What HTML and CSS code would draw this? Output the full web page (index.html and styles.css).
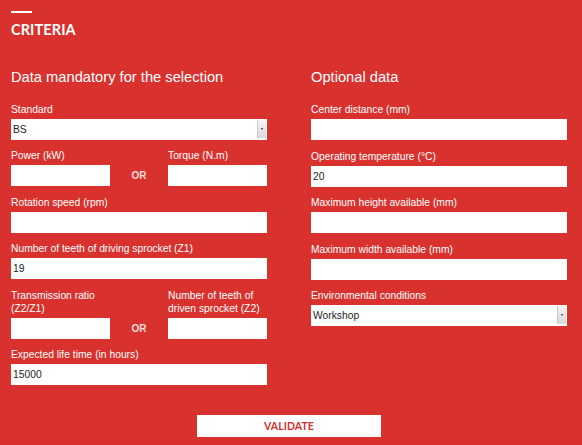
FILE: index.html
```html
<!DOCTYPE html>
<html>
<head>
<meta charset="utf-8">
<link rel="stylesheet" href="styles.css">
</head>
<body>
<div class="page">
  <div class="title-rule"></div>
  <h1 class="title">CRITERIA</h1>
  <div class="columns">
    <div class="col">
      <h2 class="col-title">Data mandatory for the selection</h2>
      <div class="field">
        <label class="lbl">Standard</label>
        <div class="select"><span class="val">BS</span><span class="arrow"><span class="tri"></span></span></div>
      </div>
      <div class="field">
        <div class="pair">
          <div class="pair-item"><label class="lbl">Power (kW)</label><div class="input"></div></div>
          <div class="or">OR</div>
          <div class="pair-item"><label class="lbl">Torque (N.m)</label><div class="input"></div></div>
        </div>
      </div>
      <div class="field">
        <label class="lbl">Rotation speed (rpm)</label>
        <div class="input"></div>
      </div>
      <div class="field">
        <label class="lbl">Number of teeth of driving sprocket (Z1)</label>
        <div class="input"><span class="val">19</span></div>
      </div>
      <div class="field">
        <div class="pair">
          <div class="pair-item"><label class="lbl">Transmission ratio<br>(Z2/Z1)</label><div class="input"></div></div>
          <div class="or">OR</div>
          <div class="pair-item"><label class="lbl">Number of teeth of<br>driven sprocket (Z2)</label><div class="input"></div></div>
        </div>
      </div>
      <div class="field">
        <label class="lbl">Expected life time (in hours)</label>
        <div class="input"><span class="val">15000</span></div>
      </div>
    </div>
    <div class="col">
      <h2 class="col-title">Optional data</h2>
      <div class="field">
        <label class="lbl">Center distance (mm)</label>
        <div class="input"></div>
      </div>
      <div class="field">
        <label class="lbl">Operating temperature (°C)</label>
        <div class="input"><span class="val">20</span></div>
      </div>
      <div class="field">
        <label class="lbl">Maximum height available (mm)</label>
        <div class="input"></div>
      </div>
      <div class="field">
        <label class="lbl">Maximum width available (mm)</label>
        <div class="input"></div>
      </div>
      <div class="field">
        <label class="lbl">Environmental conditions</label>
        <div class="select"><span class="val">Workshop</span><span class="arrow"><span class="tri"></span></span></div>
      </div>
    </div>
  </div>
  <div class="actions">
    <button class="validate">VALIDATE</button>
  </div>
</div>
</body>
</html>
```
FILE: styles.css
```css
html, body {
  margin: 0;
  padding: 0;
  background: #d8312e;
}
.page {
  width: 582px;
  height: 445px;
  box-sizing: border-box;
  padding: 11px 0 0 11px;
  background: #d8312e;
  color: #fff;
  font-family: "Liberation Sans", Arial, sans-serif;
  overflow: hidden;
}
.title-rule {
  width: 21px;
  height: 2px;
  background: #fff;
}
.title {
  margin: 9px 0 0 0;
  font-family: Lato, sans-serif;
  font-weight: 700;
  font-size: 14.5px;
  line-height: 16px;
  letter-spacing: 0.1px;
}
.columns {
  display: grid;
  grid-template-columns: 256px 256px;
  column-gap: 44px;
  margin-top: 30px;
}
.col {
  display: flex;
  flex-direction: column;
}
.col-title {
  margin: 0 0 17px 0;
  font-weight: 400;
  font-size: 14.7px;
  line-height: 18px;
}
.field {
  margin-bottom: 9.5px;
}
.lbl {
  display: block;
  font-size: 10.3px;
  line-height: 13px;
  margin-bottom: 3px;
}
.input, .select {
  height: 21px;
  background: #fff;
  color: #222;
  display: flex;
  align-items: center;
  box-sizing: border-box;
}
.select {
  height: 20.5px;
}
.val {
  font-size: 10.3px;
  padding-left: 2px;
  flex: 1;
}
.arrow {
  width: 8px;
  height: 18px;
  margin-right: 1px;
  background: linear-gradient(#f4f4f4, #d8d8d8);
  border-left: 1px solid #c8c8c8;
  display: flex;
  align-items: center;
  justify-content: center;
}
.tri {
  width: 0;
  height: 0;
  border-left: 1.5px solid transparent;
  border-right: 1.5px solid transparent;
  border-top: 2px solid #222;
}
.pair {
  display: grid;
  grid-template-columns: 99px 58px 99px;
  align-items: end;
}
.or {
  height: 21px;
  line-height: 21px;
  text-align: center;
  font-size: 10px;
  font-weight: 700;
  color: #f6dcdb;
}
.actions {
  display: flex;
  justify-content: flex-start;
  padding-left: 186px;
  margin-top: 20px;
}
.validate {
  width: 184px;
  height: 22px;
  border: none;
  background: #fff;
  color: #d0302f;
  font-family: Lato, sans-serif;
  font-size: 10.5px;
  font-weight: 700;
  letter-spacing: 0.1px;
  padding: 0;
  cursor: pointer;
}
```
